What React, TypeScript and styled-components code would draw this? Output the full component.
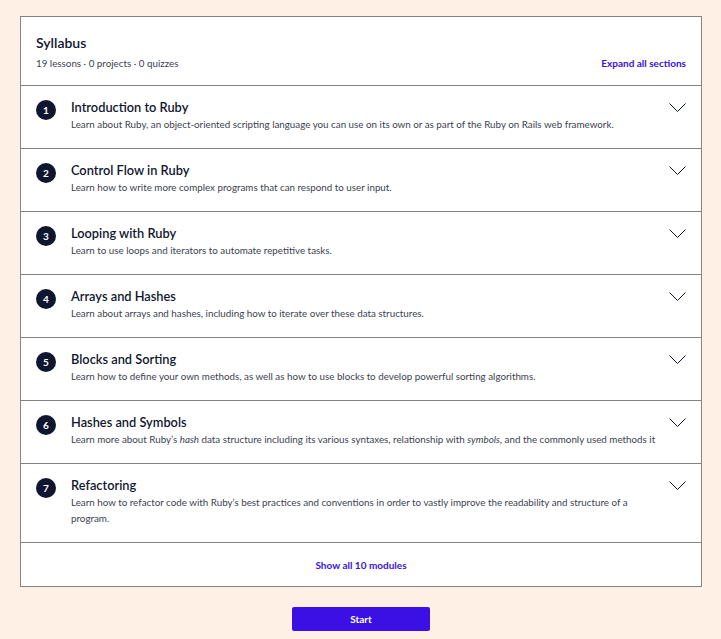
import React from "react";
import styled, { createGlobalStyle } from "styled-components";

interface IModule {
  title: string;
  description: React.ReactNode;
}

const modules: IModule[] = [
  {
    title: "Introduction to Ruby",
    description:
      "Learn about Ruby, an object-oriented scripting language you can use on its own or as part of the Ruby on Rails web framework.",
  },
  {
    title: "Control Flow in Ruby",
    description: "Learn how to write more complex programs that can respond to user input.",
  },
  {
    title: "Looping with Ruby",
    description: "Learn to use loops and iterators to automate repetitive tasks.",
  },
  {
    title: "Arrays and Hashes",
    description: "Learn about arrays and hashes, including how to iterate over these data structures.",
  },
  {
    title: "Blocks and Sorting",
    description:
      "Learn how to define your own methods, as well as how to use blocks to develop powerful sorting algorithms.",
  },
  {
    title: "Hashes and Symbols",
    description: (
      <>
        Learn more about Ruby’s <em>hash</em> data structure including its various syntaxes, relationship with{" "}
        <em>symbols</em>, and the commonly used methods it
      </>
    ),
  },
  {
    title: "Refactoring",
    description:
      "Learn how to refactor code with Ruby’s best practices and conventions in order to vastly improve the readability and structure of a program.",
  },
];

const Chevron = () => (
  <svg width="17" height="9" viewBox="0 0 17 9" fill="none">
    <path d="M0.5 0.5l8 8 8-8" stroke="#10162f" strokeWidth="1" />
  </svg>
);

const App = () => {
  return (
    <>
      <GlobalStyle />
      <Page>
        <Card>
          <Header>
            <div>
              <Title>Syllabus</Title>
              <Meta>19 lessons · 0 projects · 0 quizzes</Meta>
            </div>
            <LinkButton>Expand all sections</LinkButton>
          </Header>
          {modules.map((m, i) => (
            <Row key={m.title}>
              <Badge>{i + 1}</Badge>
              <RowText>
                <RowTitle>{m.title}</RowTitle>
                <RowDesc>{m.description}</RowDesc>
              </RowText>
              <ChevronWrap>
                <Chevron />
              </ChevronWrap>
            </Row>
          ))}
          <Footer>
            <LinkButton>Show all 10 modules</LinkButton>
          </Footer>
        </Card>
        <StartButton>Start</StartButton>
      </Page>
    </>
  );
};

const GlobalStyle = createGlobalStyle`
  body {
    margin: 0;
    background: #fff0e5;
    font-family: "Lato", "Liberation Sans", sans-serif;
    color: #10162f;
  }
`;

const Page = styled.main`
  display: flex;
  flex-direction: column;
  align-items: center;
  padding: 16px 19px 20px 20px;
`;

const Card = styled.section`
  width: 100%;
  box-sizing: border-box;
  background: #fff;
  border: 1px solid #838383;
`;

const Header = styled.div`
  display: flex;
  justify-content: space-between;
  align-items: flex-end;
  height: 69px;
  box-sizing: border-box;
  padding: 15px 15px 15px 15px;
  border-bottom: 1px solid #838383;
`;

const Title = styled.h2`
  margin: 0;
  font-size: 14px;
  line-height: 20px;
  font-weight: 600;
`;

const Meta = styled.div`
  margin-top: 3px;
  font-size: 9.8px;
  line-height: 14px;
  color: #3b3f4f;
`;

const LinkButton = styled.button`
  border: none;
  background: none;
  padding: 0;
  font-family: inherit;
  font-size: 10px;
  line-height: 14px;
  font-weight: 700;
  color: #3a10e5;
  cursor: pointer;
`;

const Row = styled.div`
  display: flex;
  align-items: flex-start;
  padding: 12px 15px 16px 15px;
  border-bottom: 1px solid #838383;
`;

const Badge = styled.span`
  flex: none;
  width: 20px;
  height: 20px;
  margin-top: 2px;
  border-radius: 50%;
  background: #10162f;
  color: #fff;
  font-size: 10px;
  font-weight: 700;
  display: flex;
  align-items: center;
  justify-content: center;
`;

const RowText = styled.div`
  flex: 1;
  margin-left: 15px;
  min-width: 0;
`;

const RowTitle = styled.h3`
  margin: 0;
  font-size: 12.8px;
  line-height: 18px;
  font-weight: 600;
`;

const RowDesc = styled.p`
  margin: 0;
  font-size: 9.8px;
  line-height: 16px;
  color: #3b3f4f;
`;

const ChevronWrap = styled.span`
  flex: none;
  margin: 5px 0 0 8px;
  display: flex;
`;

const Footer = styled.div`
  display: flex;
  justify-content: center;
  align-items: center;
  height: 43px;
`;

const StartButton = styled.button`
  margin-top: 20px;
  width: 138px;
  height: 24px;
  border: none;
  border-radius: 2px;
  background: #3a10e5;
  color: #fff;
  font-family: inherit;
  font-size: 10px;
  font-weight: 700;
  cursor: pointer;
`;

export default App;
